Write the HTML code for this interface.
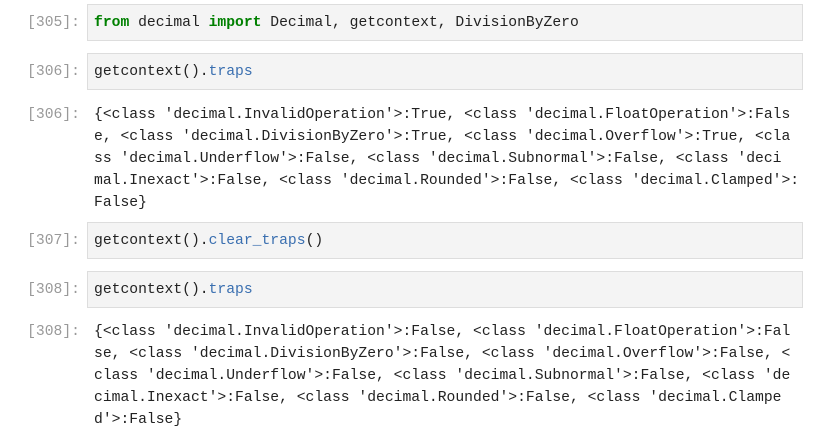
<!DOCTYPE html>
<html><head><meta charset="utf-8"><style>
body{margin:0;width:820px;height:434px;background:#fff;position:relative;overflow:hidden;font-family:"Liberation Mono",monospace;font-size:14.7px;}
.p{position:absolute;left:0;width:80px;text-align:right;color:#999;line-height:22px;}
.box{position:absolute;left:87px;width:714px;height:35px;background:#f4f4f4;border:1px solid #ddd;}
.t{position:absolute;left:94px;line-height:22px;color:#222;white-space:pre;}
.k{color:#008000;font-weight:bold}
.a{color:#3a6fb0}
</style></head><body>
<div class="box" style="top:4px"></div>
<div class="p" style="top:12px">[305]:</div>
<div class="t" style="top:12px"><span class="k">from</span> decimal <span class="k">import</span> Decimal, getcontext, DivisionByZero</div>

<div class="box" style="top:53px"></div>
<div class="p" style="top:61px">[306]:</div>
<div class="t" style="top:61px">getcontext().<span class="a">traps</span></div>

<div class="p" style="top:104px">[306]:</div>
<div class="t" style="top:104px">{&lt;class 'decimal.InvalidOperation'&gt;:True, &lt;class 'decimal.FloatOperation'&gt;:Fals
e, &lt;class 'decimal.DivisionByZero'&gt;:True, &lt;class 'decimal.Overflow'&gt;:True, &lt;cla
ss 'decimal.Underflow'&gt;:False, &lt;class 'decimal.Subnormal'&gt;:False, &lt;class 'deci
mal.Inexact'&gt;:False, &lt;class 'decimal.Rounded'&gt;:False, &lt;class 'decimal.Clamped'&gt;:
False}</div>

<div class="box" style="top:222px"></div>
<div class="p" style="top:230px">[307]:</div>
<div class="t" style="top:230px">getcontext().<span class="a">clear_traps</span>()</div>

<div class="box" style="top:271px"></div>
<div class="p" style="top:279px">[308]:</div>
<div class="t" style="top:279px">getcontext().<span class="a">traps</span></div>

<div class="p" style="top:321px">[308]:</div>
<div class="t" style="top:321px">{&lt;class 'decimal.InvalidOperation'&gt;:False, &lt;class 'decimal.FloatOperation'&gt;:Fal
se, &lt;class 'decimal.DivisionByZero'&gt;:False, &lt;class 'decimal.Overflow'&gt;:False, &lt;
class 'decimal.Underflow'&gt;:False, &lt;class 'decimal.Subnormal'&gt;:False, &lt;class 'de
cimal.Inexact'&gt;:False, &lt;class 'decimal.Rounded'&gt;:False, &lt;class 'decimal.Clampe
d'&gt;:False}</div>
</body></html>
